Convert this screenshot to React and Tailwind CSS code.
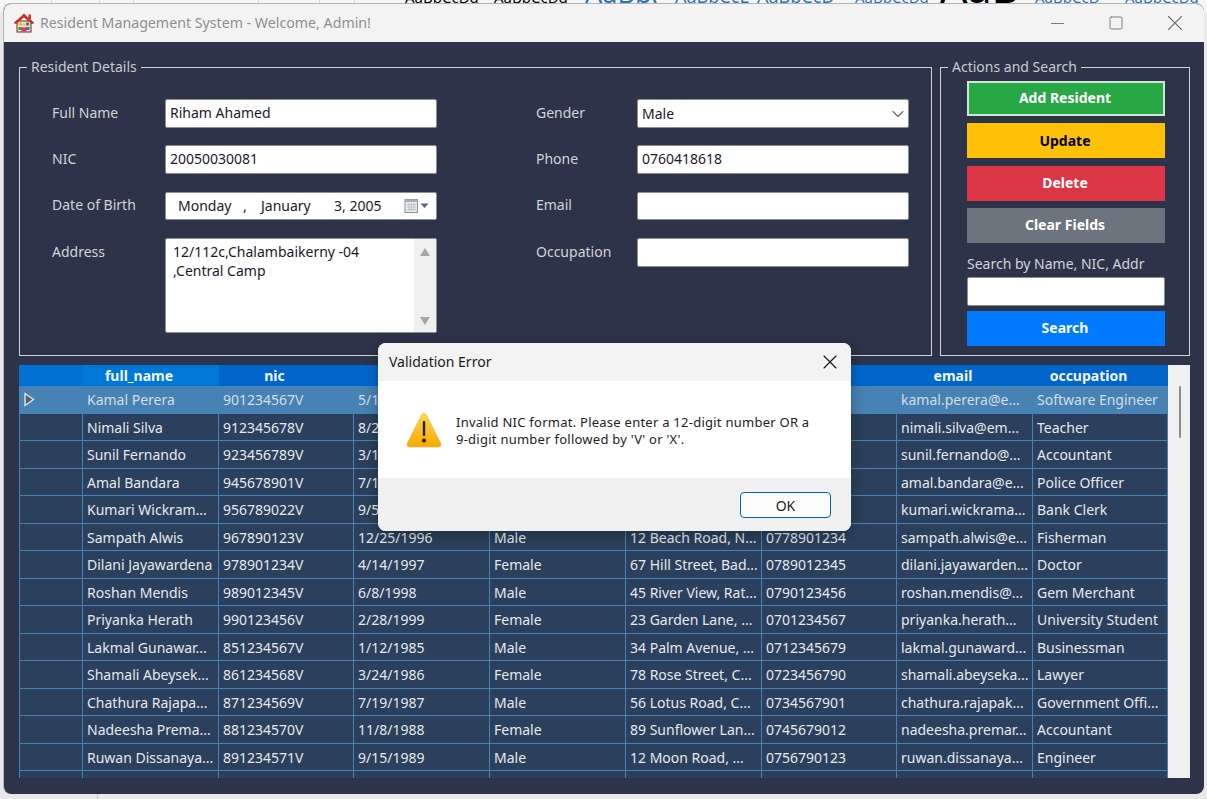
import React from 'react';
import { ChevronDown, Minus, Square, X } from 'lucide-react';

const headers = ['', 'full_name', 'nic', 'dob', 'gender', 'address', 'phone', 'email', 'occupation'];

const rows = [
  ['Kamal Perera', '901234567V', '5/15/1990', '', '', '', 'kamal.perera@e...', 'Software Engineer'],
  ['Nimali Silva', '912345678V', '8/22/1991', '', '', '', 'nimali.silva@em...', 'Teacher'],
  ['Sunil Fernando', '923456789V', '3/10/1992', '', '', '', 'sunil.fernando@...', 'Accountant'],
  ['Amal Bandara', '945678901V', '7/18/1994', '', '', '', 'amal.bandara@e...', 'Police Officer'],
  ['Kumari Wickram...', '956789022V', '9/5/1995', '', '', '', 'kumari.wickrama...', 'Bank Clerk'],
  ['Sampath Alwis', '967890123V', '12/25/1996', 'Male', '12 Beach Road, N...', '0778901234', 'sampath.alwis@e...', 'Fisherman'],
  ['Dilani Jayawardena', '978901234V', '4/14/1997', 'Female', '67 Hill Street, Bad...', '0789012345', 'dilani.jayawarden...', 'Doctor'],
  ['Roshan Mendis', '989012345V', '6/8/1998', 'Male', '45 River View, Rat...', '0790123456', 'roshan.mendis@...', 'Gem Merchant'],
  ['Priyanka Herath', '990123456V', '2/28/1999', 'Female', '23 Garden Lane, ...', '0701234567', 'priyanka.herath...', 'University Student'],
  ['Lakmal Gunawar...', '851234567V', '1/12/1985', 'Male', '34 Palm Avenue, ...', '0712345679', 'lakmal.gunaward...', 'Businessman'],
  ['Shamali Abeysek...', '861234568V', '3/24/1986', 'Female', '78 Rose Street, C...', '0723456790', 'shamali.abeyseka...', 'Lawyer'],
  ['Chathura Rajapa...', '871234569V', '7/19/1987', 'Male', '56 Lotus Road, C...', '0734567901', 'chathura.rajapak...', 'Government Offi...'],
  ['Nadeesha Prema...', '881234570V', '11/8/1988', 'Female', '89 Sunflower Lan...', '0745679012', 'nadeesha.premar...', 'Accountant'],
  ['Ruwan Dissanaya...', '891234571V', '9/15/1989', 'Male', '12 Moon Road, ...', '0756790123', 'ruwan.dissanaya...', 'Engineer'],
  ['', '', '', '', '', '', '', ''],
];

const COLS = 'grid grid-cols-[64px_136px_135px_136px_136px_136px_135px_136px_135px]';

function HouseIcon() {
  return (
    <svg width="22" height="22" viewBox="0 0 22 22" className="shrink-0">
      <rect x="4" y="9" width="14" height="11" fill="#f7dfb5" stroke="#5a3a2a" strokeWidth="1" />
      <path d="M1 11 L11 2 L21 11 L18.5 11.5 L11 5 L3.5 11.5 Z" fill="#d8322c" stroke="#8c1f1c" strokeWidth="0.6" />
      <rect x="15.5" y="2.5" width="2.5" height="4.5" fill="#c8342c" />
      <circle cx="7.5" cy="12" r="1.7" fill="#e8b23a" />
      <circle cx="14.5" cy="12" r="1.7" fill="#3a8f5a" />
      <circle cx="11" cy="13" r="1.7" fill="#f0c090" />
      <path d="M5.5 18 V15 H9.5 V18 Z" fill="#3f9a5f" />
      <path d="M12.5 18 V15 H16.5 V18 Z" fill="#3a6fc0" />
      <path d="M8.5 19.5 V15.5 H13.5 V19.5 Z" fill="#d8347a" />
    </svg>
  );
}

function WarningIcon() {
  return (
    <svg width="36" height="36" viewBox="0 0 36 36" className="shrink-0">
      <defs>
        <linearGradient id="warn" x1="0" y1="0" x2="0" y2="1">
          <stop offset="0" stopColor="#ffd84a" />
          <stop offset="1" stopColor="#f7a800" />
        </linearGradient>
      </defs>
      <path d="M18 1.5 C19 1.5 19.8 2 20.4 3 L34.6 31 C35.6 33 34.6 35 32.4 35 H3.6 C1.4 35 0.4 33 1.4 31 L15.6 3 C16.2 2 17 1.5 18 1.5 Z" fill="url(#warn)" stroke="#eebc5a" strokeWidth="0.8" />
      <rect x="16.8" y="9" width="2.4" height="15" rx="1" fill="#2a2008" />
      <circle cx="18" cy="28.5" r="2" fill="#2a2008" />
    </svg>
  );
}

function CalendarIcon() {
  return (
    <svg width="26" height="16" viewBox="0 0 26 16" className="shrink-0">
      <rect x="1" y="1.5" width="12.5" height="13" fill="#e8ebf0" stroke="#8b8f96" strokeWidth="1" />
      <rect x="1" y="1.5" width="12.5" height="2.5" fill="#a9adb5" />
      <path d="M3 6.5 H12 M3 9 H12 M3 11.5 H12 M5 5 V13 M7.5 5 V13 M10 5 V13" stroke="#b3b7bf" strokeWidth="0.7" />
      <path d="M16.5 5.5 H24.5 L20.5 10 Z" fill="#52678c" />
    </svg>
  );
}

function GroupBox({ title, className, children }) {
  return (
    <div className={`relative border border-[#cfd1d6] ${className}`}>
      <span className="absolute -top-[11px] left-[7px] bg-[#2d3348] px-[4px] text-[14px] leading-[19px] text-[#c8ccd4]">{title}</span>
      {children}
    </div>
  );
}

function Field({ label, value, h = 'h-[29px]', labelW = 'w-[113px]', width = 'w-[272px]' }) {
  return (
    <div className="flex items-center">
      <span className={`${labelW} pb-[3px] text-[14px] text-[#d0d3da]`}>{label}</span>
      <div className={`${width} ${h} flex items-center rounded-[2px] border border-[#8d8d8d] bg-white px-[4px] pb-[3px] text-[14px] text-[#1a1a2a]`}>{value}</div>
    </div>
  );
}

function Button({ bg, text = 'text-white', border = 'border-transparent', className = 'pb-[2px]', children }) {
  return (
    <div className={`flex h-[35px] w-[198px] items-center justify-center border-2 pr-[2px] text-[14px] font-bold ${bg} ${text} ${border} ${className}`}>{children}</div>
  );
}

export default function App() {
  return (
    <div className="relative h-[799px] w-[1207px] overflow-hidden bg-[#e9e9e9] font-['Noto_Sans',sans-serif]">
      {/* what shows of the document behind the window */}
      <div className="absolute left-0 top-0 flex h-[12px] w-full items-start overflow-hidden bg-[#f6f6f6]">
        <div className="h-full w-[52px] border-r border-[#d8d8d8]" />
        <div className="h-full w-[48px] border-r border-[#d8d8d8]" />
        <div className="h-full w-[34px] border-r border-[#d8d8d8]" />
        <div className="h-full w-[125px] border-r border-[#d8d8d8]" />
        <div className="h-full w-[61px] border-r border-[#d8d8d8]" />
        <div className="h-full w-[35px] border-r border-[#d8d8d8]" />
        <div className="h-full w-[50px]" />
        <div className="-mt-[35px] flex items-baseline whitespace-nowrap text-[15px] leading-none text-black">
          <span className="w-[89px]">AaBbCcDd</span>
          <span className="w-[91px]">AaBbCcDd</span>
          <span className="w-[90px] text-[27px] text-[#2e74b5]">AaBb(</span>
          <span className="w-[82px] text-[18px] text-[#2e74b5]">AaBbCcE</span>
          <span className="w-[98px] text-[18px] text-[#2e74b5]">AaBbCcD</span>
          <span className="w-[85px] text-[#2e74b5]">AaBbCcDd</span>
          <span className="w-[95px] text-[43px]">AaB</span>
          <span className="w-[90px] text-[#2e74b5]">AaBbCcD</span>
          <span className="w-[70px] text-[#2e74b5]">AaBbCcDd</span>
        </div>
      </div>
      <div className="absolute bottom-0 left-[97px] h-[5px] w-px bg-[#c4c4c4]" />

      {/* main window */}
      <div className="relative ml-[3px] mt-[3px] flex h-[791px] w-[1201px] flex-col overflow-hidden rounded-[8px] border border-[#b5b5b5] border-b-0 border-r-0 bg-[#2d3348]">
        <div className="flex h-[38px] shrink-0 items-center bg-[#f3f3f3] pl-[9px]">
          <HouseIcon />
          <span className="ml-[5px] pb-[1px] text-[14.2px] text-[#8f8f8f]">Resident Management System - Welcome, Admin!</span>
          <div className="ml-auto flex items-center pr-[16px] text-[#757575]">
            <Minus size={21} strokeWidth={1.1} className="mr-[40px]" />
            <Square size={16} strokeWidth={1.4} className="mr-[38px]" />
            <X size={26} strokeWidth={1} />
          </div>
        </div>

        <div className="flex flex-col pl-[15px] pr-[14px] pt-[25px]">
          <div className="flex gap-[8px]">
            <GroupBox title="Resident Details" className="flex h-[289px] w-[913px] pl-[32px] pt-[31px]">
              <div className="flex w-[484px] flex-col">
                <Field label="Full Name" value="Riham Ahamed" />
                <div className="mt-[17px]">
                  <Field label="NIC" value="20050030081" />
                </div>
                <div className="mt-[18px] flex items-center">
                  <span className="w-[113px] pb-[4px] text-[14px] text-[#d0d3da]">Date of Birth</span>
                  <div className="flex h-[28px] w-[272px] items-center rounded-[2px] border border-[#8d8d8d] bg-white pl-[12px] pr-[6px] text-[14px] text-[#1a1a2a]">
                    <span className="w-[65px] pb-[1px]">Monday</span>
                    <span className="w-[18px] pb-[1px]">,</span>
                    <span className="w-[73px] pb-[1px]">January</span>
                    <span className="pb-[1px]">3, 2005</span>
                    <span className="ml-auto"><CalendarIcon /></span>
                  </div>
                </div>
                <div className="mt-[18px] flex items-start">
                  <span className="mt-[3px] w-[113px] text-[14px] text-[#d0d3da]">Address</span>
                  <div className="flex h-[95px] w-[272px] rounded-[2px] border border-[#8d8d8d] bg-white text-[14px] leading-[19px] text-[#1a1a2a]">
                    <div className="flex-1 pl-[7px] pt-[3px]">
                      12/112c,Chalambaikerny -04
                      <br />
                      ,Central Camp
                    </div>
                    <div className="flex w-[22px] flex-col items-center justify-between bg-[#f0f0f0] pb-[7px] pt-[9px]">
                      <div className="h-0 w-0 border-x-[5.5px] border-b-[8px] border-x-transparent border-b-[#a6a6a6]" />
                      <div className="h-0 w-0 border-x-[5.5px] border-t-[8px] border-x-transparent border-t-[#a6a6a6]" />
                    </div>
                  </div>
                </div>
              </div>

              <div className="flex flex-col">
                <div className="flex items-center">
                  <span className="w-[101px] pb-[3px] text-[14px] text-[#d0d3da]">Gender</span>
                  <div className="flex h-[29px] w-[272px] items-center rounded-[2px] border border-[#8d8d8d] bg-white pl-[4px] text-[14px] text-[#1a1a2a]">
                    Male
                    <ChevronDown size={20} strokeWidth={1.3} className="ml-auto text-[#666666]" />
                  </div>
                </div>
                <div className="mt-[17px]">
                  <Field label="Phone" value="0760418618" labelW="w-[101px]" />
                </div>
                <div className="mt-[18px]">
                  <Field label="Email" value="" h="h-[28px]" labelW="w-[101px]" />
                </div>
                <div className="mt-[18px]">
                  <Field label="Occupation" value="" labelW="w-[101px]" />
                </div>
              </div>
            </GroupBox>

            <GroupBox title="Actions and Search" className="h-[289px] w-[250px] pl-[26px] pt-[13px]">
              <div className="flex flex-col gap-[7px]">
                <Button bg="bg-[#28a745]" border="border-[#cfe6d5]">Add Resident</Button>
                <Button bg="bg-[#ffc107]" text="text-black" className="">Update</Button>
                <Button bg="bg-[#dc3545]" className="mt-[1px] pb-[2px]">Delete</Button>
                <Button bg="bg-[#6c757d]">Clear Fields</Button>
              </div>
              <div className="mt-[10px] whitespace-nowrap text-[14px] leading-[22px] text-[#d0d3da]">Search by Name, NIC, Addr</div>
              <div className="mt-[2px] h-[29px] w-[198px] rounded-[2px] border border-[#8d8d8d] bg-white" />
              <div className="mt-[5px]">
                <Button bg="bg-[#007bff]">Search</Button>
              </div>
            </GroupBox>
          </div>

          {/* data grid */}
          <div className="mt-[9px] flex h-[413px] w-[1171px] overflow-hidden">
            <div className="w-[1149px] shrink-0">
              <div className={`${COLS} h-[21px] bg-[#0066cc] text-center text-[14px] font-bold leading-[21px] text-[#f2f6fc]`}>
                {headers.map((h, i) => (
                  <div key={i} className={i === 0 ? 'bg-[#0070d4]' : i === 1 ? 'bg-[#0078d7] pr-[24px]' : 'pr-[24px]'}>{h}</div>
                ))}
              </div>
              {rows.map((row, r) => (
                <div key={r} className={`${COLS} h-[27.5px] text-[14px] leading-[26px] ${r === 0 ? 'bg-[#4682b4] text-[#d5dde6]' : 'bg-[#2b405c] text-[#e6e8ec]'}`}>
                  <div className="flex items-center border-x border-b border-[#4682b4] pl-[3px]">
                    {r === 0 && (
                      <svg width="12" height="15" viewBox="0 0 12 15">
                        <path d="M2 1.5 L10.5 7.5 L2 13.5 Z" fill="#56616e" stroke="#e4e4e4" strokeWidth="1.4" />
                      </svg>
                    )}
                  </div>
                  {row.map((cell, c) => (
                    <div key={c} className="overflow-hidden whitespace-nowrap border-b border-r border-[#4682b4] pl-[4px] pt-[1px]">{cell}</div>
                  ))}
                </div>
              ))}
            </div>
            <div className="relative w-[22px] shrink-0 bg-[#f0f0f0]">
              <div className="absolute left-[11px] top-[21px] h-[52px] w-[2px] rounded-full bg-[#8a8a8a]" />
            </div>
          </div>
        </div>
      </div>

      {/* message box */}
      <div className="absolute left-[378px] top-[343px] flex h-[188px] w-[473px] flex-col overflow-hidden rounded-[8px] bg-white shadow-[0_4px_14px_rgba(0,0,0,0.3)]">
        <div className="flex h-[38px] shrink-0 items-center justify-between bg-[#f3f3f3] pl-[11px] pr-[9px]">
          <span className="pb-[2px] text-[14px] text-[#1a1a1a]">Validation Error</span>
          <X size={24} strokeWidth={1.1} className="text-[#111111]" />
        </div>
        <div className="flex h-[97px] shrink-0 pl-[28px] pt-[31px]">
          <WarningIcon />
          <p className="ml-[14px] whitespace-nowrap pt-[2px] text-[13px] leading-[17px] tracking-[0.25px] text-[#22222a]">
            Invalid NIC format. Please enter a 12-digit number OR a
            <br />
            9-digit number followed by 'V' or 'X'.
          </p>
        </div>
        <div className="flex flex-1 items-start justify-end bg-[#f0f0f0] pr-[20px] pt-[14px]">
          <div className="flex h-[26px] w-[91px] items-center justify-center rounded-[4px] border-[1.5px] border-[#0067c0] bg-[#fdfdfd] text-[14px] text-[#1a1a1a]">OK</div>
        </div>
      </div>
    </div>
  );
}
